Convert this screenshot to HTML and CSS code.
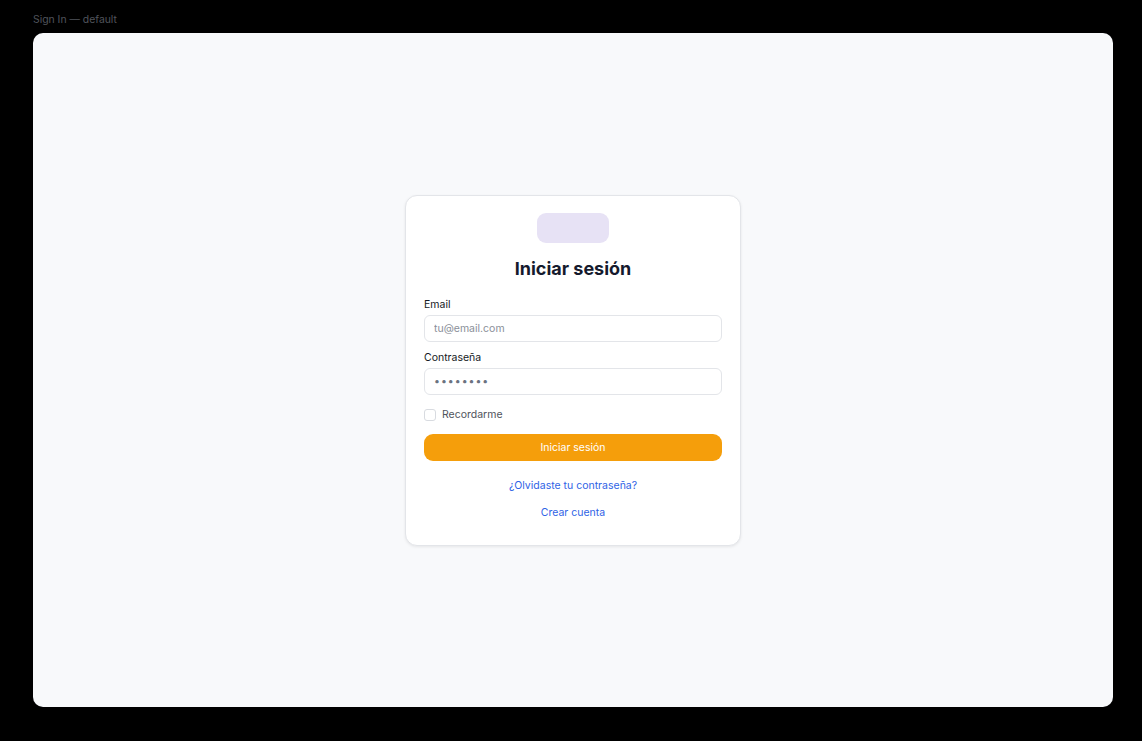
FILE: index.html
```html
<!DOCTYPE html>
<html lang="es">
<head>
<meta charset="utf-8">
<title>Sign In — default</title>
<link rel="stylesheet" href="styles.css">
</head>
<body>
<div class="canvas">
  <div class="frame-label">Sign In — default</div>
  <div class="frame">
    <div class="card">
      <div class="logo"></div>
      <h1 class="title">Iniciar sesión</h1>
      <form class="form">
        <label class="field">
          <span class="label">Email</span>
          <input class="input" type="email" placeholder="tu@email.com">
        </label>
        <label class="field">
          <span class="label">Contraseña</span>
          <input class="input input-pass" type="password" value="password">
        </label>
        <label class="remember">
          <span class="checkbox"></span>
          <span class="remember-text">Recordarme</span>
        </label>
        <button class="btn" type="button">Iniciar sesión</button>
      </form>
      <div class="links">
        <a class="link" href="#">¿Olvidaste tu contraseña?</a>
        <a class="link" href="#">Crear cuenta</a>
      </div>
    </div>
  </div>
</div>
</body>
</html>
```
FILE: styles.css
```css
* { box-sizing: border-box; }
html, body { margin: 0; padding: 0; background: #000; }
body { font-family: Inter, "Noto Sans", sans-serif; }
.canvas {
  width: 1142px;
  height: 741px;
  padding: 13px 29px 34px 33px;
  display: flex;
  flex-direction: column;
}
.frame-label {
  font-size: 10.4px;
  line-height: 14px;
  color: #50545c;
  height: 20px;
}
.frame {
  flex: 1;
  background: #f8f9fb;
  border-radius: 10px;
  display: flex;
  align-items: center;
  justify-content: center;
}
.card {
  width: 336px;
  background: #fff;
  border: 1px solid #e3e5e9;
  border-radius: 12px;
  box-shadow: 0 1px 3px rgba(0,0,0,0.08);
  padding: 17px 18px 25px;
  display: flex;
  flex-direction: column;
  align-items: center;
}
.logo {
  width: 72px;
  height: 30px;
  border-radius: 9px;
  background: #e7e2f5;
}
.title {
  margin: 14px 0 0;
  font-size: 18px;
  line-height: 24px;
  font-weight: 700;
  color: #151a2d;
}
.form {
  width: 100%;
  margin-top: 17px;
  display: flex;
  flex-direction: column;
}
.field { display: flex; flex-direction: column; margin-bottom: 9px; }
.label {
  font-size: 10.5px;
  line-height: 14px;
  color: #151a24;
  margin-bottom: 3px;
}
.input {
  height: 27px;
  border: 1px solid #e3e5e9;
  border-radius: 6px;
  padding: 0 9px;
  font-family: inherit;
  font-size: 10.5px;
  color: #4b5563;
  background: #fff;
  outline: none;
}
.input::placeholder { color: #8a8f99; }
.input-pass { letter-spacing: 1px; color: #6b7280; }
.remember {
  display: flex;
  align-items: center;
  gap: 6px;
  margin-top: 4px;
}
.checkbox {
  width: 12px;
  height: 12px;
  border: 1px solid #d8dbe0;
  border-radius: 3px;
  background: #fff;
}
.remember-text { font-size: 10.5px; line-height: 14px; color: #50545c; }
.btn {
  margin-top: 12px;
  height: 27px;
  border: none;
  border-radius: 9px;
  background: #f59e0b;
  color: #fff;
  font-family: inherit;
  font-size: 10.5px;
}
.links {
  margin-top: 18px;
  display: flex;
  flex-direction: column;
  align-items: center;
  gap: 13px;
}
.link {
  font-size: 10.5px;
  line-height: 14px;
  color: #2f63e6;
  text-decoration: none;
}
```
